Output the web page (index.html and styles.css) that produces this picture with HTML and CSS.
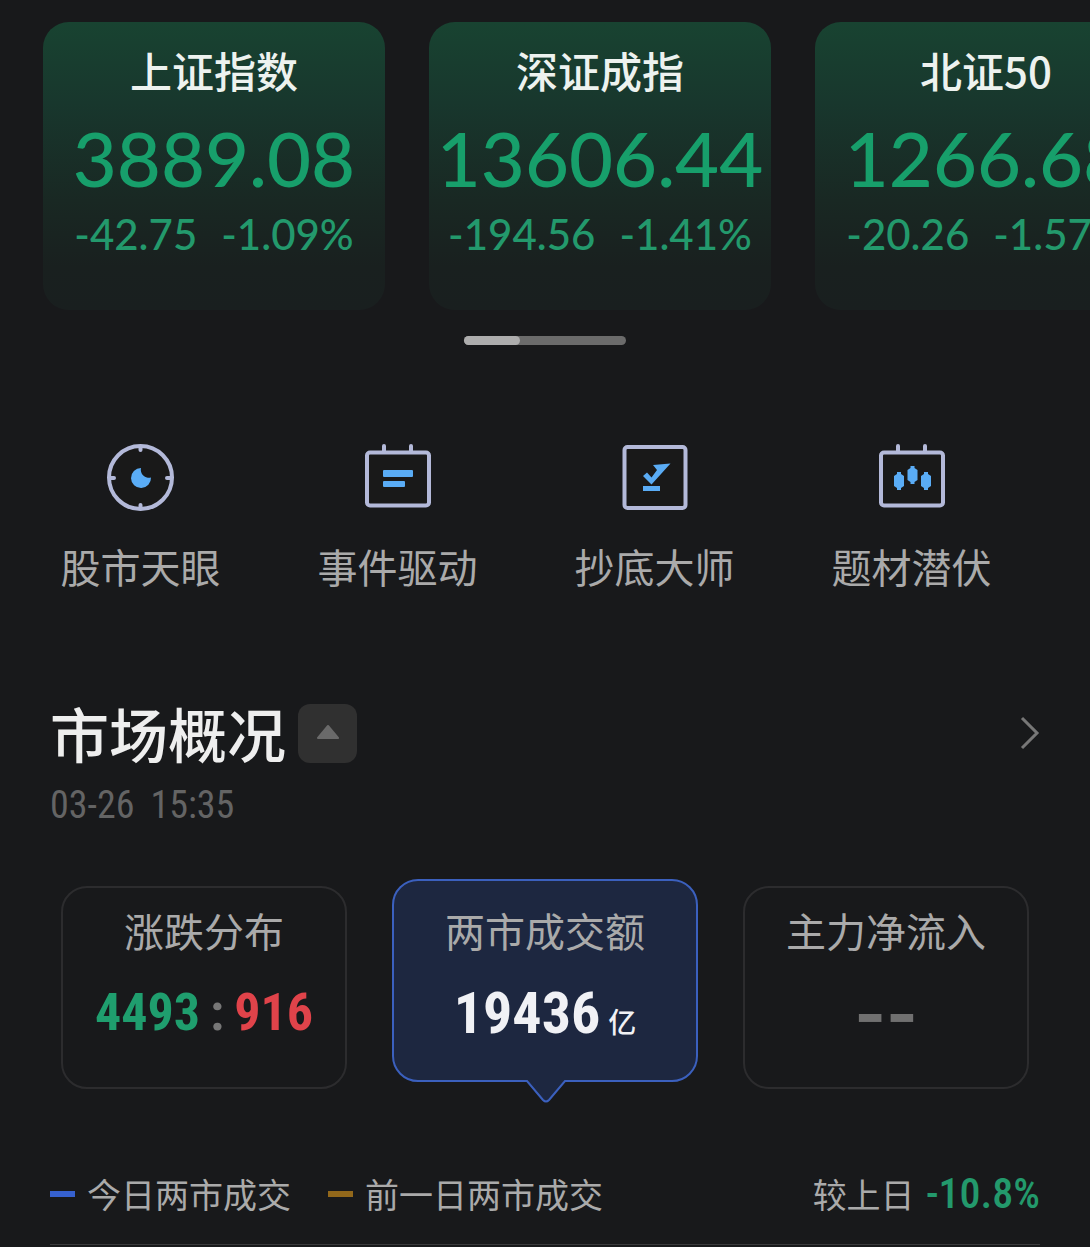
FILE: index.html
```html
<!DOCTYPE html>
<html lang="zh-CN">
<head>
<meta charset="utf-8">
<meta name="viewport" content="width=device-width, initial-scale=1">
<title>市场概况</title>
<link rel="stylesheet" href="styles.css">
</head>
<body>
<main class="page">
  <section class="indices" aria-label="指数">
    <article class="index-card">
      <h2 class="index-name">上证指数</h2>
      <p class="index-value">3889.08</p>
      <p class="index-change"><span>-42.75</span><span>-1.09%</span></p>
    </article>
    <article class="index-card">
      <h2 class="index-name">深证成指</h2>
      <p class="index-value">13606.44</p>
      <p class="index-change"><span>-194.56</span><span>-1.41%</span></p>
    </article>
    <article class="index-card">
      <h2 class="index-name">北证50</h2>
      <p class="index-value">1266.68</p>
      <p class="index-change"><span>-20.26</span><span>-1.57%</span></p>
    </article>
  </section>
  <div class="pager"><div class="pager-thumb"></div></div>

  <nav class="features">
    <a class="feature" href="#eye">
      <svg class="feature-icon" viewBox="1 0 72 72" aria-hidden="true">
        <circle class="frame" cx="36.500" cy="35.500" r="31.500"/>
        <path class="tick" d="M36.500 5v3M36.500 63v3M7 36h3M63 36h3"/>
        <path class="glyph" d="M37 26a8 8 0 0 0 10 9.500A10 10 0 1 1 37 26z"/>
      </svg>
      <span>股市天眼</span>
    </a>
    <a class="feature" href="#events">
      <svg class="feature-icon" viewBox="1 0 72 72" aria-hidden="true">
        <path class="tick" d="M23 4v6M50 4v6"/>
        <rect class="frame" x="6" y="10.500" width="62" height="53" rx="3"/>
        <rect class="glyph" x="22" y="28" width="30" height="7" rx="1"/>
        <rect class="glyph" x="22" y="39" width="22" height="6" rx="1"/>
      </svg>
      <span>事件驱动</span>
    </a>
    <a class="feature" href="#bottom">
      <svg class="feature-icon" viewBox="1 0 72 72" aria-hidden="true">
        <rect class="frame" x="6.500" y="5" width="61" height="61" rx="3"/>
        <path class="glyph" d="M25 34l4-3.500 4.500 5L39 28l-4-5 17.500-1.500-19 21z"/>
        <rect class="glyph" x="25" y="44" width="17" height="5"/>
      </svg>
      <span>抄底大师</span>
    </a>
    <a class="feature" href="#themes">
      <svg class="feature-icon" viewBox="1 0 72 72" aria-hidden="true">
        <path class="tick" d="M23 4v6M50 4v6"/>
        <rect class="frame" x="6" y="10.500" width="62" height="53" rx="3"/>
        <path class="glyph" d="M22 30h4v2l3 2v10l-3 2v2h-4v-2l-3-2V34l3-2zM35.500 24h4v2l3 2v10l-3 2v2h-4v-2l-3-2V28l3-2zM49 30h4v2l3 2v10l-3 2v2h-4v-2l-3-2V34l3-2z"/>
      </svg>
      <span>题材潜伏</span>
    </a>
  </nav>

  <section class="overview">
    <header class="overview-head">
      <h1 class="overview-title">市场概况</h1>
      <button class="toggle" type="button" aria-label="收起">
        <svg viewBox="0 0 24 16" width="24" height="16" aria-hidden="true"><path d="M12 1L22 13H2z" fill="#6a6a6a" stroke="#6a6a6a" stroke-width="2" stroke-linejoin="round"/></svg>
      </button>
      <a class="more" href="#overview" aria-label="更多">
        <svg viewBox="0 0 20 34" width="20" height="34" aria-hidden="true"><path d="M2 2l15 15L2 32" fill="none" stroke="#777" stroke-width="3"/></svg>
      </a>
    </header>
    <p class="stamp"><span>03-26</span><span>15:35</span></p>

    <div class="tabs">
      <button class="tab" type="button">
        <span class="tab-label">涨跌分布</span>
        <span class="tab-value"><span class="down">4493</span><span class="colon">:</span><span class="up">916</span></span>
      </button>
      <button class="tab tab-active" type="button">
        <span class="tab-label">两市成交额</span>
        <span class="tab-value tab-total"><span>19436</span><span class="unit">亿</span></span>
        <svg class="tab-tail" viewBox="0 0 40 24" width="40" height="24" aria-hidden="true">
          <path d="M0 0L1 2L17 20Q20 24 23 20L39 2L40 0z" fill="#1d2740"/>
          <path d="M0 1L1 1L17 20Q20 23 23 20L39 1L40 1" fill="none" stroke="#3b60be" stroke-width="2"/>
        </svg>
      </button>
      <button class="tab" type="button">
        <span class="tab-label">主力净流入</span>
        <span class="tab-value tab-empty">--</span>
      </button>
    </div>

    <div class="legend">
      <span class="legend-item"><i class="swatch swatch-today"></i>今日两市成交</span>
      <span class="legend-item"><i class="swatch swatch-prev"></i>前一日两市成交</span>
      <span class="compare">较上日<b class="compare-value">-10.8%</b></span>
    </div>
  </section>
</main>
</body>
</html>
```
FILE: styles.css
```css
* { box-sizing: border-box; }

body {
  margin: 0;
  background: #18191b;
  color: #aaa;
  font-family: "Noto Sans CJK SC", sans-serif;
}

h1, h2, p { margin: 0; }
a { color: inherit; text-decoration: none; }
button { font: inherit; color: inherit; background: none; border: 0; padding: 0; cursor: pointer; }

.page { overflow: hidden; }

/* index carousel */
.indices {
  display: flex;
  gap: 44px;
  padding: 22px 43px 0;
  overflow-x: auto;
  scrollbar-width: none;
}
.index-card {
  flex: 0 0 342px;
  height: 288px;
  padding-top: 18px;
  border-radius: 26px;
  background: linear-gradient(#184331, #18372d 28%, #192823 62%, #19201f 85%, #191f1f);
  text-align: center;
  white-space: nowrap;
}
.index-name {
  font-size: 42px;
  line-height: 60px;
  font-weight: 500;
  color: #edf2ef;
}
.index-value {
  font-family: "Lato Medium", Lato, sans-serif;
  font-size: 76px;
  line-height: 80px;
  margin-top: 18px;
  font-weight: 500;
  color: #179f6b;
}
.index-change {
  display: flex;
  justify-content: center;
  gap: 24px;
  font-family: "Lato Medium", Lato, sans-serif;
  font-size: 42px;
  line-height: 48px;
  margin-top: 12px;
  font-weight: 500;
  color: #23996c;
}
.pager {
  width: 162px;
  height: 9px;
  margin: 26px auto 0;
  border-radius: 5px;
  background: #6b6b6b;
}
.pager-thumb {
  width: 56px;
  height: 9px;
  border-radius: 5px;
  background: #adadad;
}

/* shortcuts */
.features {
  display: grid;
  grid-template-columns: repeat(4, 1fr);
  padding: 97px 50px 0 12px;
}
.feature {
  display: flex;
  flex-direction: column;
  align-items: center;
  gap: 22px;
  font-size: 40px;
  line-height: 60px;
}
.feature-icon { width: 72px; height: 72px; }
.frame { fill: #191919; stroke: #b3b9d9; stroke-width: 4; }
.tick { fill: none; stroke: #b3b9d9; stroke-width: 4; stroke-linecap: round; }
.glyph { fill: #5aacf5; }

/* market overview */
.overview { padding: 95px 50px 0; }
.overview-head {
  display: flex;
  align-items: center;
  height: 84px;
}
.overview-title {
  font-size: 59px;
  line-height: 84px;
  font-weight: 500;
  color: #eee;
}
.toggle {
  display: grid;
  place-items: center;
  width: 59px;
  height: 59px;
  margin-left: 12px;
  border-radius: 12px;
  background: #303030;
}
.more { display: flex; margin-left: auto; }
.stamp {
  display: flex;
  gap: 16px;
  margin-top: 8px;
  font-family: "Roboto Condensed", Roboto, sans-serif;
  font-size: 38px;
  line-height: 44px;
  color: #646464;
}
.tabs {
  display: grid;
  grid-template-columns: 286fr 306fr 286fr;
  gap: 45px;
  padding: 52px 11px 0;
}
.tab {
  position: relative;
  display: flex;
  flex-direction: column;
  align-items: center;
  height: 203px;
  margin-top: 7px;
  padding-top: 12px;
  border: 2px solid #2c2c2e;
  border-radius: 26px;
  white-space: nowrap;
}
.tab-active {
  margin-top: 0;
  padding-top: 19px;
  border-color: #3b60be;
  background: #1d2740;
}
.tab-tail {
  position: absolute;
  left: 50%;
  top: 100%;
  margin-left: -19px;
}
.tab-label { font-size: 40px; line-height: 60px; }
.tab-value {
  display: flex;
  align-items: baseline;
  font-family: "Roboto Condensed", Roboto, sans-serif;
  font-size: 52px;
  line-height: 60px;
  margin-top: 23px;
  font-weight: 700;
}
.tab-total { font-size: 58px; gap: 8px; color: #f0f1f5; }
.unit { font-family: "Noto Sans CJK SC", sans-serif; font-size: 28px; line-height: 30px; font-weight: 500; }
.tab-empty { font-family: Inter, sans-serif; font-size: 68px; color: #707070; }
.down { color: #1f9e6e; }
.up { color: #e0434a; }
.colon { padding: 0 10px; color: #777; }

.legend {
  display: flex;
  align-items: center;
  gap: 37px;
  margin-top: 80px;
  padding-bottom: 25px;
  border-bottom: 1px solid #3a3a3c;
  font-size: 34px;
  line-height: 50px;
  white-space: nowrap;
}
.legend-item { display: flex; align-items: center; gap: 12px; }
.swatch { width: 25px; height: 6px; background: #3661cf; }
.swatch-prev { background: #92681b; }
.compare { display: flex; align-items: baseline; gap: 11px; margin-left: auto; }
.compare-value {
  font-family: "Roboto Condensed", Roboto, sans-serif;
  font-size: 42px;
  font-weight: 500;
  color: #23996c;
}
```
